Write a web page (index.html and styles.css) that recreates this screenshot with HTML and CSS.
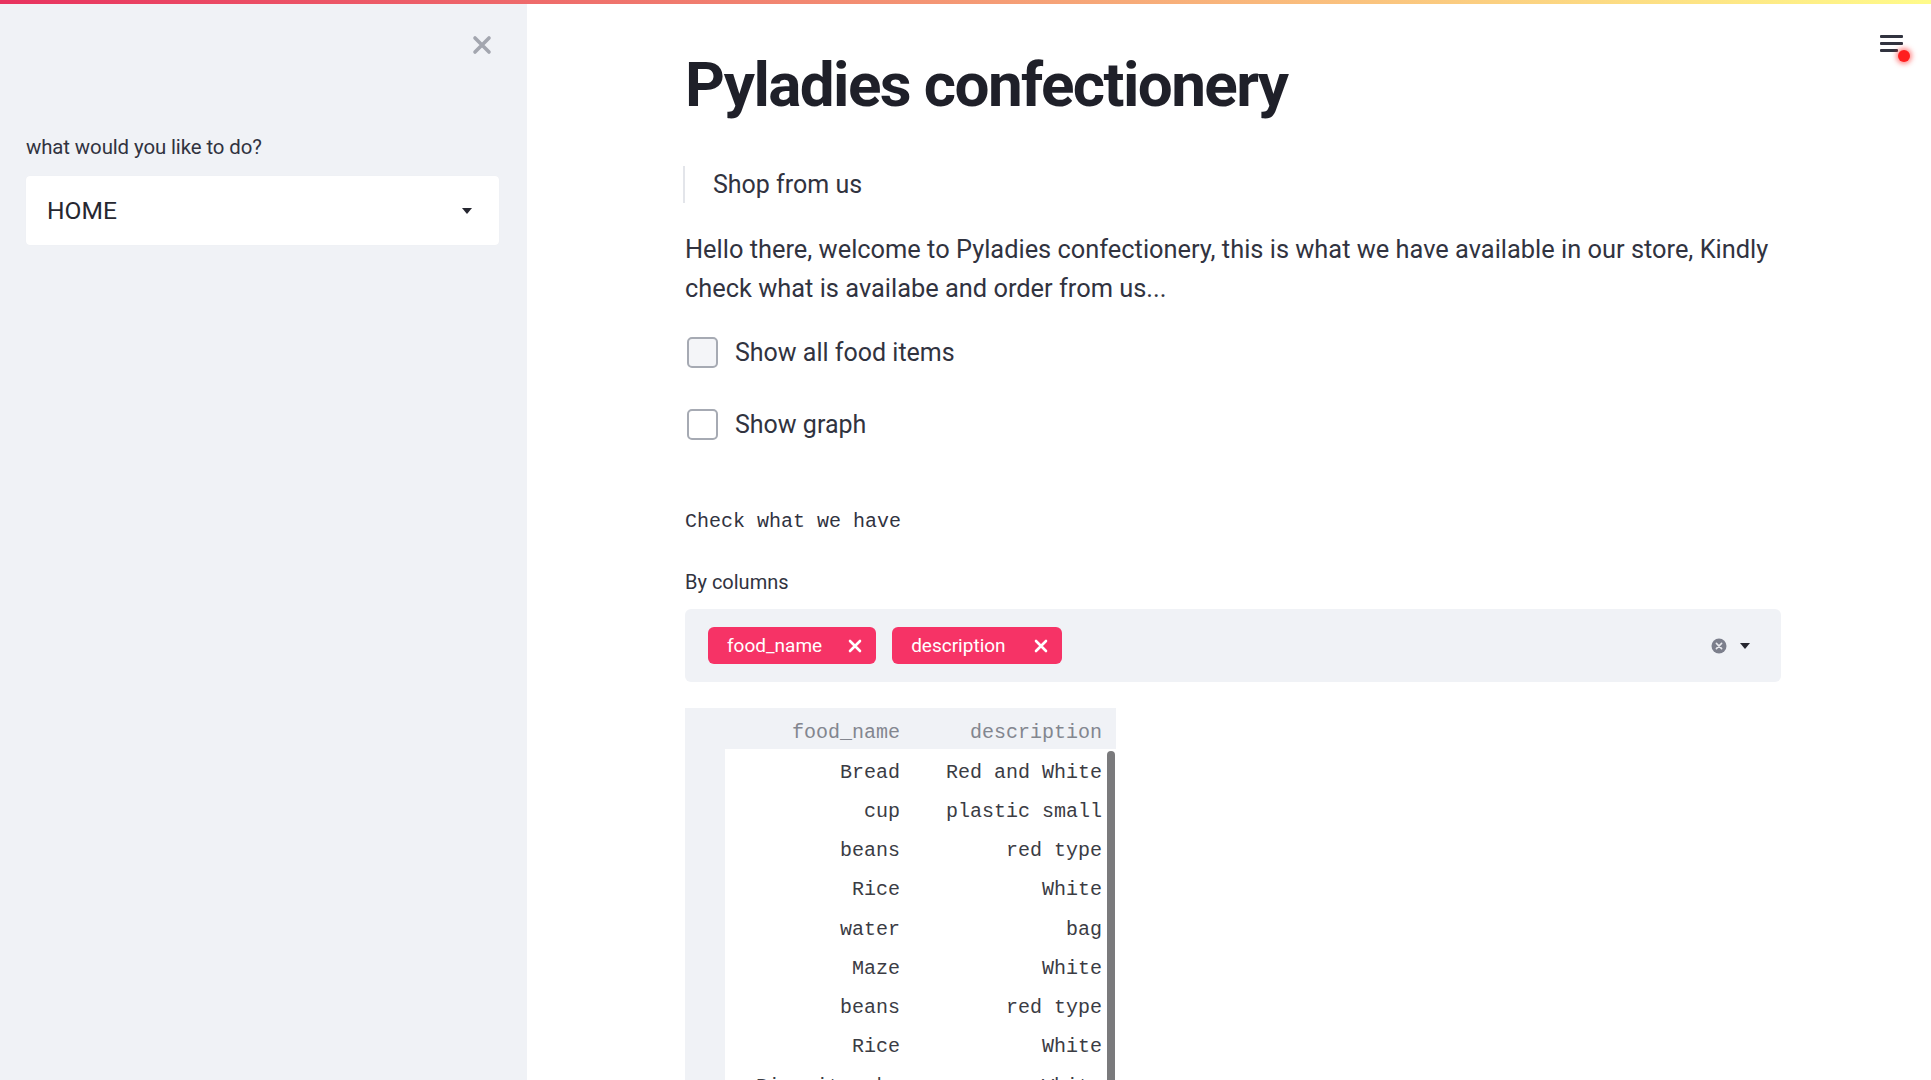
FILE: index.html
```html
<!DOCTYPE html>
<html lang="en">
<head>
<meta charset="utf-8">
<title>Pyladies confectionery</title>
<link rel="stylesheet" href="styles.css">
</head>
<body>
<div class="decoration"></div>
<div class="app">
  <aside class="sidebar">
    <div class="sb-head">
      <svg class="close" width="20" height="20" viewBox="0 0 20 20"><path d="M3 3 L17 17 M17 3 L3 17" stroke="#a3a6af" stroke-width="3.6" stroke-linecap="round"/></svg>
    </div>
    <div class="sb-label">what would you like to do?</div>
    <div class="select">
      <span class="select-value">HOME</span>
      <svg class="caret" width="12" height="8" viewBox="0 0 12 8"><path d="M1 1 L11 1 L6 7 Z" fill="#262730"/></svg>
    </div>
  </aside>

  <main class="main">
    <div class="menu">
      <span class="bar"></span><span class="bar"></span><span class="bar short"></span>
      <span class="dot"></span>
    </div>
    <div class="block">
      <h1 class="title">Pyladies confectionery</h1>
      <blockquote class="quote">Shop from us</blockquote>
      <p class="para">Hello there, welcome to Pyladies confectionery, this is what we have available in our store, Kindly check what is availabe and order from us...</p>
      <label class="check check-first"><span class="box box-hover"></span><span>Show all food items</span></label>
      <label class="check check-second"><span class="box"></span><span>Show graph</span></label>
      <div class="mono">Check what we have</div>
      <div class="ms-label">By columns</div>
      <div class="multi">
        <div class="tags">
          <span class="tag tag-food">food_name<svg class="tag-x" width="14" height="14" viewBox="0 0 14 14"><path d="M2 2 L12 12 M12 2 L2 12" stroke="#fff" stroke-width="2.6" stroke-linecap="round"/></svg></span>
          <span class="tag tag-desc">description<svg class="tag-x" width="14" height="14" viewBox="0 0 14 14"><path d="M2 2 L12 12 M12 2 L2 12" stroke="#fff" stroke-width="2.6" stroke-linecap="round"/></svg></span>
        </div>
        <div class="ms-icons">
          <svg class="clear" width="16" height="16" viewBox="0 0 16 16"><circle cx="8" cy="8" r="7.5" fill="#7c7f8c"/><path d="M5.4 5.4 L10.6 10.6 M10.6 5.4 L5.4 10.6" stroke="#e9eaee" stroke-width="1.6" stroke-linecap="round"/></svg>
          <svg class="ms-caret" width="12" height="8" viewBox="0 0 12 8"><path d="M1 1 L11 1 L6 7 Z" fill="#262730"/></svg>
        </div>
      </div>
      <div class="table">
        <div class="thead">
          <div class="cell idx"></div>
          <div class="cell hd">food_name</div>
          <div class="cell hd">description</div>
          <div class="cell"></div>
        </div>
        <div class="tbody">
          <div class="rows">
            <div class="tr"><div class="cell idx"></div><div class="cell">Bread</div><div class="cell">Red and White</div></div>
            <div class="tr"><div class="cell idx"></div><div class="cell">cup</div><div class="cell">plastic small</div></div>
            <div class="tr"><div class="cell idx"></div><div class="cell">beans</div><div class="cell">red type</div></div>
            <div class="tr"><div class="cell idx"></div><div class="cell">Rice</div><div class="cell">White</div></div>
            <div class="tr"><div class="cell idx"></div><div class="cell">water</div><div class="cell">bag</div></div>
            <div class="tr"><div class="cell idx"></div><div class="cell">Maze</div><div class="cell">White</div></div>
            <div class="tr"><div class="cell idx"></div><div class="cell">beans</div><div class="cell">red type</div></div>
            <div class="tr"><div class="cell idx"></div><div class="cell">Rice</div><div class="cell">White</div></div>
            <div class="tr"><div class="cell idx"></div><div class="cell">Biscuit cake</div><div class="cell">White</div></div>
          </div>
          <div class="scroll"><div class="thumb"></div></div>
        </div>
      </div>
    </div>
  </main>
</div>
</body>
</html>
```
FILE: styles.css
```css
html, body {
  margin: 0;
  height: 100%;
  overflow: hidden;
}
body {
  font-family: Roboto, "Liberation Sans", sans-serif;
  color: #31333f;
  background: #ffffff;
}
.decoration {
  position: fixed;
  top: 0;
  left: 0;
  right: 0;
  height: 4px;
  background: linear-gradient(90deg, #e8325f 0%, #f07a6e 35%, #f9b87c 65%, #fffb8a 100%);
  z-index: 10;
}
.app {
  display: flex;
  height: 1080px;
  overflow: hidden;
}

/* Sidebar */
.sidebar {
  width: 527px;
  flex: none;
  box-sizing: border-box;
  background: #f0f2f6;
  padding: 0 28px 0 26px;
}
.sb-head {
  display: flex;
  justify-content: flex-end;
  padding-top: 35px;
  margin-right: 7px;
}
.close { display: block; }
.sb-label {
  margin-top: 77px;
  font-size: 20.4px;
  line-height: 30px;
  color: #31333f;
  letter-spacing: -0.1px;
}
.select {
  margin-top: 14px;
  height: 69px;
  background: #ffffff;
  border-radius: 4px;
  display: flex;
  align-items: center;
  justify-content: space-between;
  padding: 0 26px 0 21px;
  box-shadow: 0 0 1px rgba(0,0,0,0.05);
}
.select-value {
  font-size: 24.6px;
  color: #262730;
}
.caret { display: block; }

/* Main */
.main {
  flex: 1;
  position: relative;
  padding: 45px 0 0 158px;
}
.block {
  width: 1096px;
}
.menu {
  position: absolute;
  top: 35px;
  right: 28px;
  width: 23px;
  height: 20px;
  display: flex;
  flex-direction: column;
  gap: 4px;
}
.bar {
  display: block;
  height: 3px;
  width: 23px;
  background: #31333f;
  border-radius: 1px;
}
.bar.short { width: 18px; }
.dot {
  position: absolute;
  left: 18px;
  top: 15px;
  width: 12px;
  height: 12px;
  border-radius: 50%;
  background: #ff1f1f;
  box-shadow: 0 0 5px 2px rgba(255, 40, 40, 0.55);
}

.title {
  margin: 0;
  font-size: 62px;
  line-height: 79px;
  font-weight: 700;
  letter-spacing: -1.6px;
  color: #1f2029;
}
.quote {
  margin: 42px 0 0 -2px;
  border-left: 2px solid #e3e5ea;
  padding-left: 28px;
  font-size: 25px;
  line-height: 37px;
  color: #31333f;
}
.para {
  margin: 27px 0 0;
  font-size: 25.4px;
  line-height: 39px;
  color: #31333f;
}
.check {
  display: flex;
  align-items: center;
  height: 39px;
  font-size: 25px;
  color: #31333f;
}
.check-first { margin-top: 24.5px; }
.check-second { margin-top: 33.5px; }
.box {
  width: 31px;
  height: 31px;
  box-sizing: border-box;
  border: 2px solid #a6aab3;
  border-radius: 5px;
  margin: 0 17px 0 2px;
  background: #ffffff;
}
.box-hover { background: #f4f5f8; }
.mono {
  margin-top: 62.5px;
  font-family: "Liberation Mono", "DejaVu Sans Mono", monospace;
  font-size: 20px;
  line-height: 30px;
  color: #31333f;
}
.ms-label {
  margin-top: 30.5px;
  font-size: 20px;
  line-height: 30px;
  color: #31333f;
}
.multi {
  margin-top: 12px;
  height: 73px;
  background: #f0f2f6;
  border-radius: 6px;
  display: flex;
  align-items: center;
  justify-content: space-between;
  padding: 0 30px 0 23px;
}
.tags {
  display: flex;
  gap: 16px;
}
.tag {
  display: flex;
  align-items: center;
  height: 37px;
  box-sizing: border-box;
  background: #f63366;
  color: #ffffff;
  border-radius: 6px;
  font-size: 19px;
  padding: 0 14px 0 19px;
}
.tag-food .tag-x { margin-left: 26px; }
.tag-desc .tag-x { margin-left: 28px; }
.tag-x { display: block; }
.ms-icons {
  display: flex;
  align-items: center;
  gap: 12px;
}
.clear, .ms-caret { display: block; }

/* Table */
.table {
  margin-top: 26px;
  width: 431px;
  font-family: "Liberation Mono", "DejaVu Sans Mono", monospace;
  font-size: 20px;
}
.thead {
  display: grid;
  grid-template-columns: 40px 181px 201px 9px;
  height: 41px;
  background: #f0f2f6;
  align-items: center;
}
.cell {
  text-align: right;
  white-space: nowrap;
  padding-top: 7px;
}
.thead .hd { color: #83868f; }
.thead .cell:nth-child(2), .tr .cell:nth-child(2) { padding-right: 6px; }
.thead .cell:nth-child(3), .tr .cell:nth-child(3) { padding-right: 5px; }
.tbody {
  display: flex;
}
.rows {
  width: 422px;
}
.tr {
  display: grid;
  grid-template-columns: 40px 181px 201px;
  height: 39.25px;
  align-items: center;
  color: #3b3c44;
}
.tr .idx {
  align-self: stretch;
  background: #f0f2f6;
}
.scroll {
  width: 9px;
  padding-top: 2px;
}
.thumb {
  width: 8px;
  height: 420px;
  border-radius: 4px;
  background: #7a7a7c;
}
```
